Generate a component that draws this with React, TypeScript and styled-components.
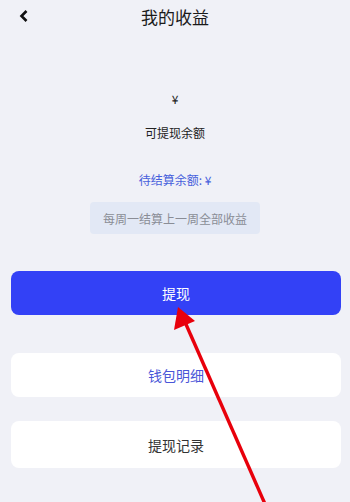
import React from 'react';
import styled, { createGlobalStyle } from 'styled-components';

const GlobalStyle = createGlobalStyle`
    html, body {
        margin: 0;
        padding: 0;
        background: #f0f1f7;
        font-family: "Noto Sans CJK SC", "Noto Sans", sans-serif;
    }
`;

const Page = styled.div`
    position: relative;
    width: 350px;
    height: 502px;
    overflow: hidden;
    background: #f0f1f7;
`;

const Header = styled.header`
    position: relative;
    height: 32px;
    display: flex;
    align-items: center;
    justify-content: center;
`;

const BackButton = styled.button`
    position: absolute;
    left: 13px;
    top: 5px;
    width: 22px;
    height: 22px;
    border: none;
    background: none;
    padding: 0;
    display: flex;
    align-items: center;
    justify-content: center;
`;

const Title = styled.h1`
    margin: 0;
    font-size: 17px;
    font-weight: 400;
    color: #1a1a1a;
`;

const Summary = styled.section`
    display: flex;
    flex-direction: column;
    align-items: center;
    padding-top: 57px;
`;

const Amount = styled.div`
    font-size: 12px;
    line-height: 20px;
    color: #222;
`;

const Label = styled.div`
    margin-top: 14px;
    font-size: 12px;
    line-height: 20px;
    color: #222;
`;

const Pending = styled.div`
    margin-top: 27px;
    font-size: 12px;
    line-height: 20px;
    color: #4660dc;
`;

const Notice = styled.div`
    margin-top: 12px;
    width: 170px;
    height: 32px;
    border-radius: 4px;
    background: #e2e8f5;
    color: #8a8d96;
    font-size: 12px;
    display: flex;
    align-items: center;
    justify-content: center;
`;

const Actions = styled.div`
    display: flex;
    flex-direction: column;
    padding: 37px 9px 0 11px;
`;

const ActionButton = styled.button<{ $variant: 'primary' | 'link' | 'plain'; $gap: number; $h: number }>`
    margin-top: ${p => p.$gap}px;
    height: ${p => p.$h}px;
    border: none;
    border-radius: 8px;
    font-family: inherit;
    font-size: 14px;
    background: ${p => (p.$variant === 'primary' ? '#3341f6' : '#ffffff')};
    color: ${p => (p.$variant === 'primary' ? '#ffffff' : p.$variant === 'link' ? '#4a56d8' : '#333333')};
`;

const Annotation = styled.svg`
    position: absolute;
    left: 0;
    top: 0;
    pointer-events: none;
`;

const App = () => {
    return (
        <Page>
            <GlobalStyle />
            <Header>
                <BackButton>
                    <svg width="14" height="14" viewBox="0 0 14 14">
                        <path d="M9.5 2 L4.5 7 L9.5 12" fill="none" stroke="#111" strokeWidth="2.6" />
                    </svg>
                </BackButton>
                <Title>我的收益</Title>
            </Header>
            <Summary>
                <Amount>¥</Amount>
                <Label>可提现余额</Label>
                <Pending>待结算余额: ¥</Pending>
                <Notice>每周一结算上一周全部收益</Notice>
            </Summary>
            <Actions>
                <ActionButton $variant="primary" $gap={0} $h={44}>提现</ActionButton>
                <ActionButton $variant="link" $gap={38} $h={44}>钱包明细</ActionButton>
                <ActionButton $variant="plain" $gap={24} $h={47}>提现记录</ActionButton>
            </Actions>
            <Annotation width="350" height="502" viewBox="0 0 350 502">
                <line x1="265" y1="504" x2="185" y2="322" stroke="#e8000b" strokeWidth="3.4" />
                <polygon points="178,307 174,330 195,321" fill="#e8000b" />
            </Annotation>
        </Page>
    );
};

export default App;
